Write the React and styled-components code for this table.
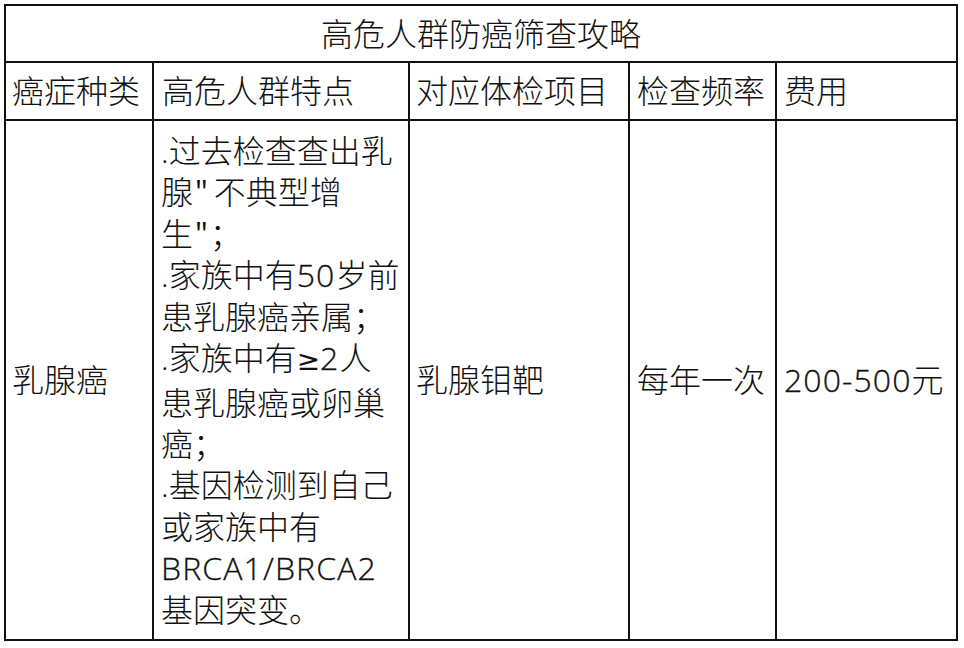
import React from "react";
import styled, { createGlobalStyle } from "styled-components";

const Global = createGlobalStyle`
  html, body { margin: 0; padding: 0; background: #ffffff; }
  body { font-family: "Noto Sans CJK SC", "Noto Sans", sans-serif; color: #111; }
`;

const Sheet = styled.div`
  padding: 4px 0 0 4px;
`;

const Grid = styled.div`
  display: inline-grid;
  grid-template-columns: 148px 256px 220px 147px 181px;
  grid-template-rows: 57px 58px 520px;
  border-left: 2px solid #111;
  border-top: 2px solid #111;
  background: #fff;
`;

const Cell = styled.div`
  box-sizing: border-box;
  border-right: 2px solid #111;
  border-bottom: 2px solid #111;
  display: flex;
  align-items: center;
  justify-content: ${(p) => (p.$center ? "center" : "flex-start")};
  padding-left: ${(p) => (p.$center ? 0 : p.$pad ?? 7)}px;
  font-family: "Open Sans", "Noto Sans CJK SC", sans-serif;
  font-weight: 300;
  font-size: 32px;
  line-height: 1;
  white-space: nowrap;
  color: #111;
`;

const TitleCell = styled(Cell)`
  grid-column: 1 / -1;
  padding-top: 1px;
`;

const Lines = styled.div`
  display: flex;
  flex-direction: column;
`;

const Line = styled.span`
  display: block;
  line-height: 41.4px;
  white-space: nowrap;
`;

const Latin = styled.span`
  font-family: "Open Sans", sans-serif;
  font-weight: 300;
  font-size: 32px;
  letter-spacing: 1.1px;
  -webkit-text-stroke: 0.3px #111;
`;

const Quote = styled.span`
  font-family: "Open Sans", sans-serif;
  font-weight: 400;
  margin: 0 ${(p) => p.$after ?? 4}px 0 ${(p) => p.$before ?? 0}px;
`;

const Sym = styled.span`
  font-family: "DejaVu Sans", sans-serif;
  font-weight: 400;
  font-size: 28px;
`;

const headers = ["癌症种类", "高危人群特点", "对应体检项目", "检查频率", "费用"];
const headerPads = [6, 8, 6, 7, 7];

const features = [
  ".过去检查查出乳",
  <>腺<Quote $before={2} $after={6}>"</Quote>不典型增</>,
  <>生<Quote $before={2} $after={2}>"</Quote>；</>,
  <>.家族中有<Latin>50</Latin>岁前</>,
  "患乳腺癌亲属；",
  <>.家族中有<Sym>≥</Sym><Latin>2</Latin>人</>,
  "患乳腺癌或卵巢",
  "癌；",
  ".基因检测到自己",
  "或家族中有",
  <Latin>BRCA1/BRCA2</Latin>,
  "基因突变。",
];

export default function App() {
  return (
    <>
      <Global />
      <Sheet>
        <Grid>
          <TitleCell $center>高危人群防癌筛查攻略</TitleCell>
          {headers.map((h, i) => (
            <Cell key={h} $pad={headerPads[i]}>
              {h}
            </Cell>
          ))}
          <Cell $pad={6}>乳腺癌</Cell>
          <Cell $pad={7}>
            <Lines>
              {features.map((f, i) => (
                <Line key={i}>{f}</Line>
              ))}
            </Lines>
          </Cell>
          <Cell $pad={6}>乳腺钼靶</Cell>
          <Cell $pad={7}>每年一次</Cell>
          <Cell $pad={7}>
            <Latin>200-500</Latin>元
          </Cell>
        </Grid>
      </Sheet>
    </>
  );
}
